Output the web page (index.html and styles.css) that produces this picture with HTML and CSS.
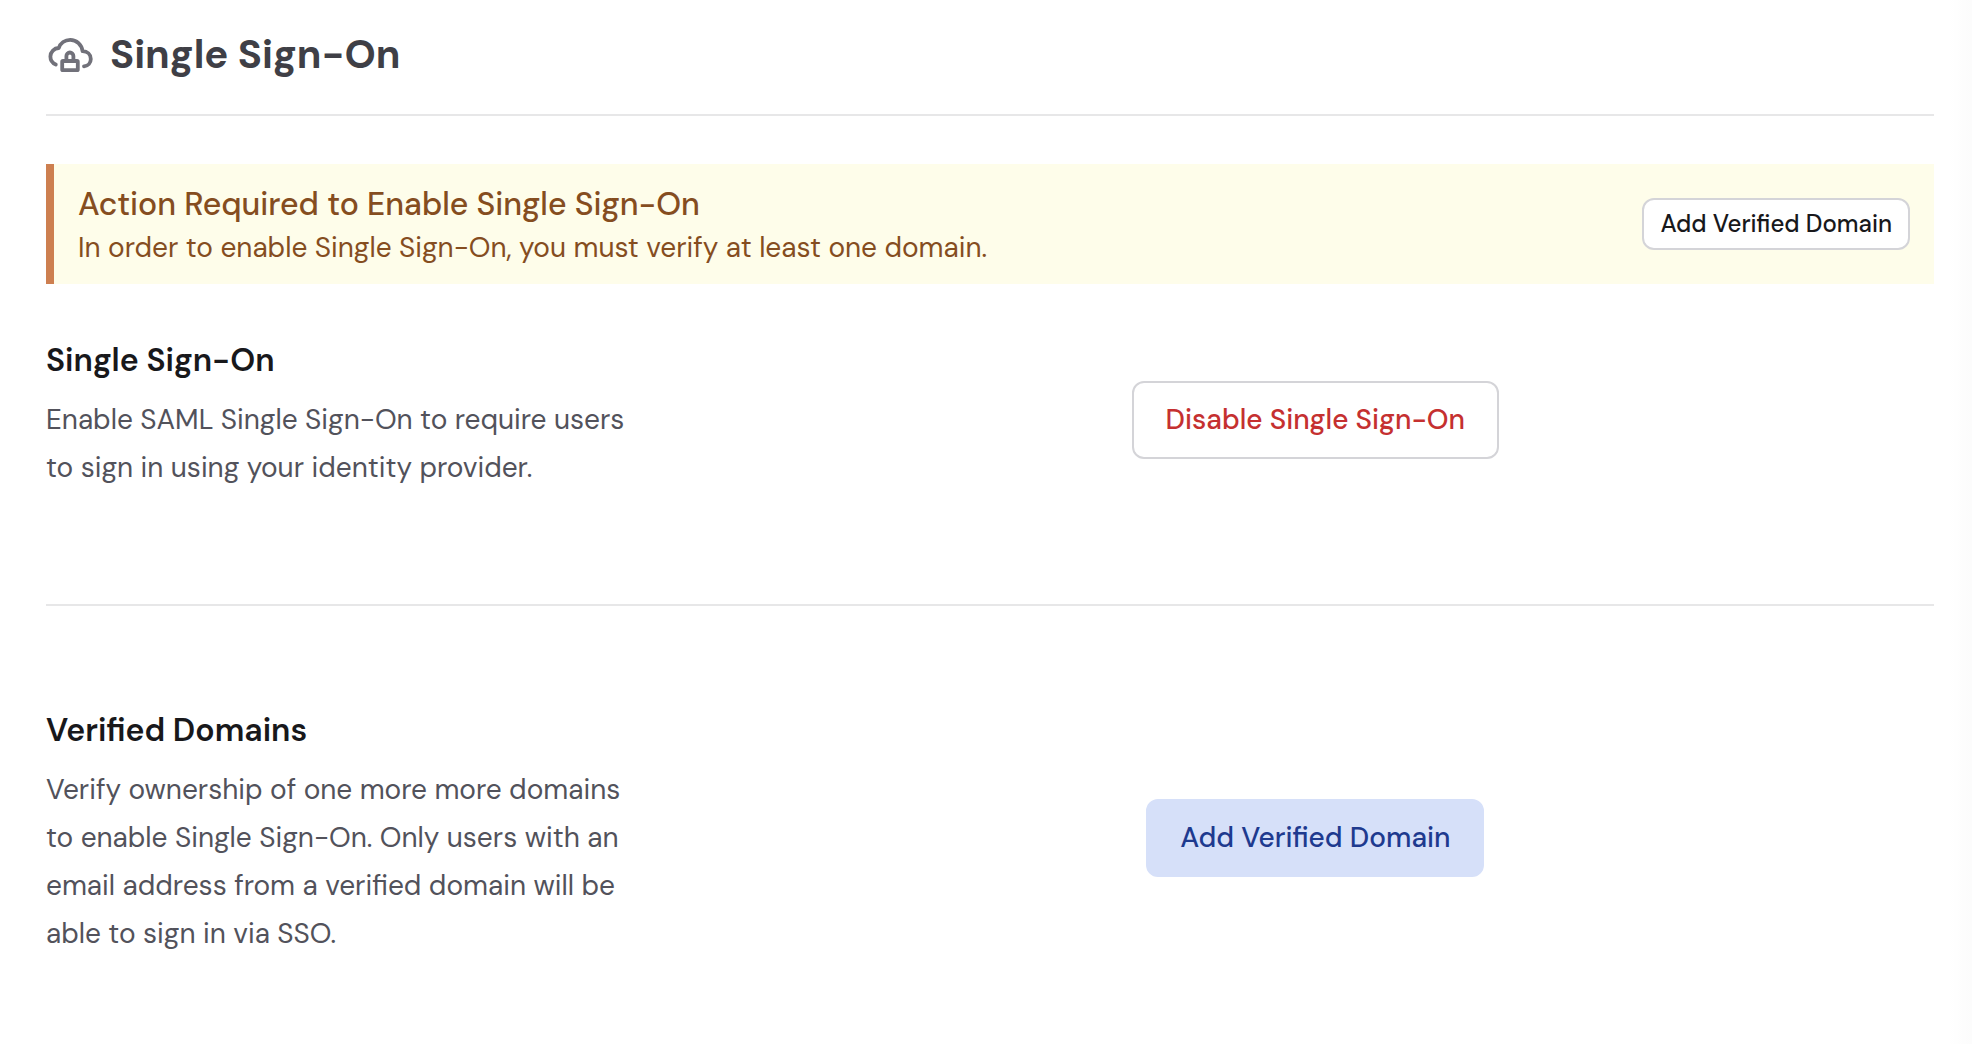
FILE: index.html
```html
<!DOCTYPE html>
<html lang="en">
<head>
    <meta charset="UTF-8">
    <meta name="viewport" content="width=device-width, initial-scale=1.0">
    <title>Single Sign-On</title>
    <link rel="stylesheet" href="styles.css">
</head>
<body>

<main class="page">
    <header class="page-header">
        <svg class="page-icon" viewBox="0 0 24 24" fill="none" stroke="currentColor" stroke-width="1.9" stroke-linecap="round" stroke-linejoin="round" aria-hidden="true">
            <path d="M4.9 17.3C3.2 16.6 2.2 15.1 2.2 13.3c0-2.4 1.9-4.2 4.2-4.3C7.2 6.5 9.5 4.9 12.1 4.9c3.2 0 5.8 2.4 6.2 5.7 2.3.1 4.1 1.6 4.1 3.9 0 2-1.4 3.5-3.4 3.7"/>
            <rect x="8.1" y="15.5" width="7.8" height="4.6" rx="0.4"/>
            <path d="M10.2 15.4v-2.4a1.75 1.75 0 0 1 3.5 0v2.4"/>
        </svg>
        <h1>Single Sign-On</h1>
    </header>

    <div class="notice">
        <div class="notice-text">
            <h2>Action Required to Enable Single Sign-On</h2>
            <p>In order to enable Single Sign-On, you must verify at least one domain.</p>
        </div>
        <button type="button" class="btn btn-small">Add Verified Domain</button>
    </div>

    <section class="setting">
        <div class="setting-text">
            <h2>Single Sign-On</h2>
            <p>Enable SAML Single Sign-On to require users to sign in using your identity provider.</p>
        </div>
        <div class="setting-action">
            <button type="button" class="btn btn-danger">Disable Single Sign-On</button>
        </div>
    </section>

    <section class="setting">
        <div class="setting-text">
            <h2>Verified Domains</h2>
            <p>Verify ownership of one more more domains to enable Single Sign-On. Only users with an email address from a verified domain will be able to sign in via SSO.</p>
        </div>
        <div class="setting-action">
            <button type="button" class="btn btn-primary">Add Verified Domain</button>
        </div>
    </section>
</main>

</body>
</html>
```
FILE: styles.css
```css
* {
    margin: 0;
    padding: 0;
    box-sizing: border-box;
}

body {
    font-family: 'DM Sans', Inter, sans-serif;
    font-size: 28px;
    color: #18181b;
    background: linear-gradient(to left, #fcfcfc, #ffffff 24px);
    min-height: 100vh;
}

.page {
    padding: 24px 38px 0 46px;
}

.page-header {
    display: flex;
    align-items: center;
    gap: 16px;
    padding-bottom: 30px;
    border-bottom: 2px solid #e7e7e8;
    margin-bottom: 48px;
}

.page-icon {
    width: 48px;
    height: 48px;
    color: #71717a;
}

h1 {
    font-size: 40px;
    line-height: 60px;
    font-weight: 700;
    color: #3f3f46;
}

h2 {
    font-size: 32px;
    line-height: 48px;
    font-weight: 600;
}

.notice {
    display: flex;
    align-items: center;
    justify-content: space-between;
    gap: 24px;
    padding: 16px 24px;
    background: #fefdea;
    border-left: 8px solid #cd7f50;
    color: #854d1f;
    margin-bottom: 52px;
}

.notice h2 {
    font-weight: 500;
}

.notice p {
    line-height: 40px;
}

.setting {
    display: grid;
    grid-template-columns: repeat(3, 1fr);
    gap: 64px;
    align-items: center;
}

.setting + .setting {
    border-top: 2px solid #e7e7e8;
    margin-top: 100px;
    padding-top: 100px;
}

.setting-text {
    padding-bottom: 12px;
}

.setting-text p {
    margin-top: 12px;
    line-height: 48px;
    color: #52525b;
}

.setting-action {
    grid-column: span 2;
    text-align: center;
}

.btn {
    padding: 17px 32px;
    font-family: inherit;
    font-size: 28px;
    line-height: 40px;
    font-weight: 500;
    color: #18181b;
    background: white;
    border: 2px solid #d4d4d8;
    border-radius: 12px;
    cursor: pointer;
}

.btn-small {
    padding: 8px 16px;
    font-size: 24px;
    line-height: 32px;
}

.btn-danger {
    color: #c53030;
}

.btn-primary {
    color: #1e3a8f;
    background: #d6e0f9;
    border-color: #d6e0f9;
}
```
